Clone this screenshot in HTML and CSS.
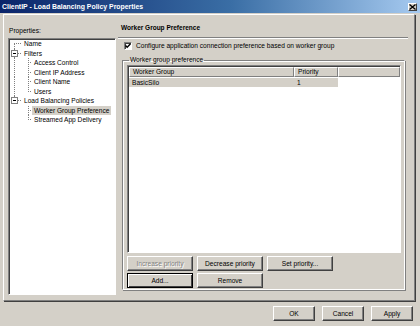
FILE: index.html
```html
<!DOCTYPE html>
<html>
<head>
    <title>ClientIP - Load Balancing Policy Properties</title>
    <link rel="stylesheet" href="styles.css">
</head>
<body>
    <div class="window">
        <div class="titlebar">
            <span class="title">ClientIP - Load Balancing Policy Properties</span>
            <span class="close">
                <svg width="7" height="6" viewBox="0 0 7 6"><path d="M0.5 0.5 L6.5 5.5 M6.5 0.5 L0.5 5.5" stroke="#000" stroke-width="1.3"/></svg>
            </span>
        </div>

        <div class="panel">
            <div class="side">
                <div class="side-label">Properties:</div>
                <div class="tree">
                    <div class="row"><span class="g g-first"></span><span class="label">Name</span></div>
                    <div class="row"><span class="g g-box-mid"><span class="box"></span></span><span class="label">Filters</span></div>
                    <div class="row"><span class="g g-pass"></span><span class="g2 g-tee"></span><span class="label">Access Control</span></div>
                    <div class="row"><span class="g g-pass"></span><span class="g2 g-tee"></span><span class="label">Client IP Address</span></div>
                    <div class="row"><span class="g g-pass"></span><span class="g2 g-tee"></span><span class="label">Client Name</span></div>
                    <div class="row"><span class="g g-pass"></span><span class="g2 g-ell"></span><span class="label">Users</span></div>
                    <div class="row"><span class="g g-box-last"><span class="box"></span></span><span class="label">Load Balancing Policies</span></div>
                    <div class="row"><span class="g"></span><span class="g2 g-tee"></span><span class="label selected">Worker Group Preference</span></div>
                    <div class="row"><span class="g"></span><span class="g2 g-ell"></span><span class="label">Streamed App Delivery</span></div>
                </div>
            </div>

            <div class="main">
                <div class="heading">Worker Group Preference</div>
                <div class="rule"></div>
                <div class="check-row">
                    <span class="checkbox">
                        <svg width="6" height="6" viewBox="0 0 6 6"><path d="M0.5 2.5 L2.2 4.3 L5.5 0.8" fill="none" stroke="#000" stroke-width="1.4"/></svg>
                    </span>
                    <span>Configure application connection preference based on worker group</span>
                </div>

                <fieldset class="group">
                    <legend>Worker group preference</legend>
                    <div class="list">
                        <div class="list-head">
                            <span class="col-name">Worker Group</span>
                            <span class="col-prio">Priority</span>
                            <span class="col-rest"></span>
                        </div>
                        <div class="list-row">
                            <span class="col-name cell-sel">BasicSilo</span>
                            <span class="col-prio cell-sel">1</span>
                        </div>
                    </div>
                    <div class="btn-row">
                        <button class="btn btn-wide" disabled>Increase priority</button>
                        <button class="btn btn-wide">Decrease priority</button>
                        <button class="btn btn-wide">Set priority...</button>
                    </div>
                    <div class="btn-row">
                        <button class="btn btn-wide btn-default">Add...</button>
                        <button class="btn btn-wide">Remove</button>
                    </div>
                </fieldset>
            </div>
        </div>

        <div class="footer">
            <button class="btn btn-small">OK</button>
            <button class="btn btn-small">Cancel</button>
            <button class="btn btn-small">Apply</button>
        </div>
    </div>
</body>
</html>
```

FILE: styles.css
```css
body {
    margin: 0;
    background-color: #d4d0c8;
    font-family: "Liberation Sans", Arial, sans-serif;
    font-size: 6.6px;
    color: #000;
}
.window {
    width: 420px;
    height: 326px;
    overflow: hidden;
    background-color: #d4d0c8;
}
.titlebar {
    height: 13px;
    display: flex;
    align-items: center;
    justify-content: space-between;
    background: linear-gradient(to right, #0a246a 0%, #3a6ea5 55%, #a6caf0 100%);
    padding: 0 3px 0 2px;
}
.title {
    color: #fff;
    font-weight: bold;
    font-size: 6.9px;
}
.close {
    width: 9px;
    height: 8px;
    display: flex;
    align-items: center;
    justify-content: center;
    background-color: #d4d0c8;
    border: 1px solid;
    border-color: #fff #404040 #404040 #fff;
    box-sizing: border-box;
}

/* main raised panel */
.panel {
    margin: 1px 0 0 3px;
    width: 412px;
    height: 287px;
    box-sizing: border-box;
    border: 1px solid;
    border-color: #fff #808080 #808080 #fff;
    box-shadow: 1px 1px 0 #404040;
    display: flex;
}
.side {
    width: 110px;
    padding-left: 4px;
    flex: none;
}
.side-label {
    height: 23px;
    line-height: 8px;
    padding: 12px 0 0 1px;
    box-sizing: border-box;
}
.tree {
    width: 108px;
    height: 257px;
    box-sizing: border-box;
    background-color: #fff;
    border: 1px solid;
    border-color: #808080 #fff #fff #808080;
    box-shadow: inset 1px 1px #404040, 1px 1px 0 #d4d0c8;
}
.row {
    display: flex;
    align-items: center;
    height: 9.5px;
}
.g, .g2 {
    flex: none;
    height: 100%;
    background-repeat: no-repeat;
}
.g {
    width: 13px;
}
.g2 {
    width: 10px;
}
.g-first {
    background-image: repeating-linear-gradient(#808080 0 1px, transparent 1px 2px), repeating-linear-gradient(to right, #808080 0 1px, transparent 1px 2px);
    background-size: 1px 50%, 8px 1px;
    background-position: 5px 100%, 5px 50%;
}
.g-pass {
    background-image: repeating-linear-gradient(#808080 0 1px, transparent 1px 2px);
    background-size: 1px 100%;
    background-position: 5px 0;
}
.g2.g-tee {
    background-image: repeating-linear-gradient(#808080 0 1px, transparent 1px 2px), repeating-linear-gradient(to right, #808080 0 1px, transparent 1px 2px);
    background-size: 1px 100%, 4px 1px;
    background-position: 6px 0, 6px 50%;
}
.g2.g-ell {
    background-image: repeating-linear-gradient(#808080 0 1px, transparent 1px 2px), repeating-linear-gradient(to right, #808080 0 1px, transparent 1px 2px);
    background-size: 1px 50%, 4px 1px;
    background-position: 6px 0, 6px 50%;
}
.g-box-mid, .g-box-last {
    display: flex;
    align-items: center;
    background-image: repeating-linear-gradient(#808080 0 1px, transparent 1px 2px), repeating-linear-gradient(to right, #808080 0 1px, transparent 1px 2px);
    background-size: 1px 100%, 8px 1px;
    background-position: 5px 0, 5px 50%;
}
.g-box-last {
    background-size: 1px 50%, 8px 1px;
}
.box {
    width: 7px;
    height: 7px;
    margin-left: 2px;
    box-sizing: border-box;
    border: 1px solid #808080;
    background: linear-gradient(#000, #000) center / 3px 1px no-repeat, #fff;
}
.label {
    padding: 0 2px;
    line-height: 9px;
    white-space: nowrap;
}
.selected {
    background-color: #d4d0c8;
}

/* right side */
.main {
    flex: 1;
}
.heading {
    font-weight: bold;
    font-size: 6.5px;
    height: 22px;
    line-height: 8px;
    padding: 9px 0 0 3px;
    box-sizing: border-box;
}
.rule {
    width: 290px;
    height: 0;
    border-top: 1px solid #808080;
    border-bottom: 1px solid #fff;
}
.check-row {
    display: flex;
    align-items: center;
    height: 9px;
    margin: 2px 0 0 6px;
    gap: 4px;
}
.checkbox {
    width: 8px;
    height: 8px;
    box-sizing: border-box;
    background-color: #fff;
    border: 1px solid;
    border-color: #808080 #fff #fff #808080;
    box-shadow: inset 1px 1px #404040;
    display: flex;
    align-items: center;
    justify-content: center;
}
.group {
    margin: 6px 0 0 4px;
    width: 283px;
    height: 234px;
    box-sizing: border-box;
    padding: 1px 3px 0 4px;
    border: 1px solid;
    border-color: #808080 #fff #fff #808080;
    box-shadow: inset 1px 1px #fff, 1px 1px 0 #808080;
    min-width: 0;
}
.group legend {
    padding: 0 1px;
    margin-left: 2px;
    line-height: 8px;
}
.list {
    height: 188px;
    box-sizing: border-box;
    background-color: #fff;
    border: 1px solid;
    border-color: #808080 #fff #fff #808080;
    box-shadow: inset 1px 1px #404040;
    padding: 1px 0 0 1px;
}
.list-head {
    display: flex;
    height: 10px;
}
.list-head span {
    box-sizing: border-box;
    background-color: #d4d0c8;
    border: 1px solid;
    border-color: #fff #808080 #808080 #fff;
    line-height: 8px;
    padding-left: 3px;
}
.list-row {
    display: flex;
    height: 9px;
    margin-top: 1px;
}
.list-row span {
    line-height: 9px;
    padding-left: 3px;
    box-sizing: border-box;
}
.col-name {
    width: 165px;
}
.col-prio {
    width: 44px;
}
.col-rest {
    flex: 1;
}
.cell-sel {
    background-color: #d4d0c8;
}
.btn-row {
    display: flex;
    gap: 4px;
    margin-top: 3px;
}
.btn-row + .btn-row {
    margin-top: 2px;
}
.btn {
    height: 15px;
    box-sizing: border-box;
    font: inherit;
    color: #000;
    background-color: #d4d0c8;
    border: 1px solid;
    border-color: #fff #404040 #404040 #fff;
    box-shadow: inset -1px -1px #808080;
    padding: 0;
}
.btn:disabled {
    color: #808080;
    text-shadow: 1px 1px #fff;
}
.btn-default {
    border-color: #000;
    box-shadow: inset 1px 1px #fff, inset -1px -1px #404040;
}
.btn-wide {
    width: 66px;
}
.footer {
    display: flex;
    justify-content: flex-end;
    gap: 7px;
    padding: 5px 7px 0 0;
}
.btn-small {
    width: 42px;
}
```
